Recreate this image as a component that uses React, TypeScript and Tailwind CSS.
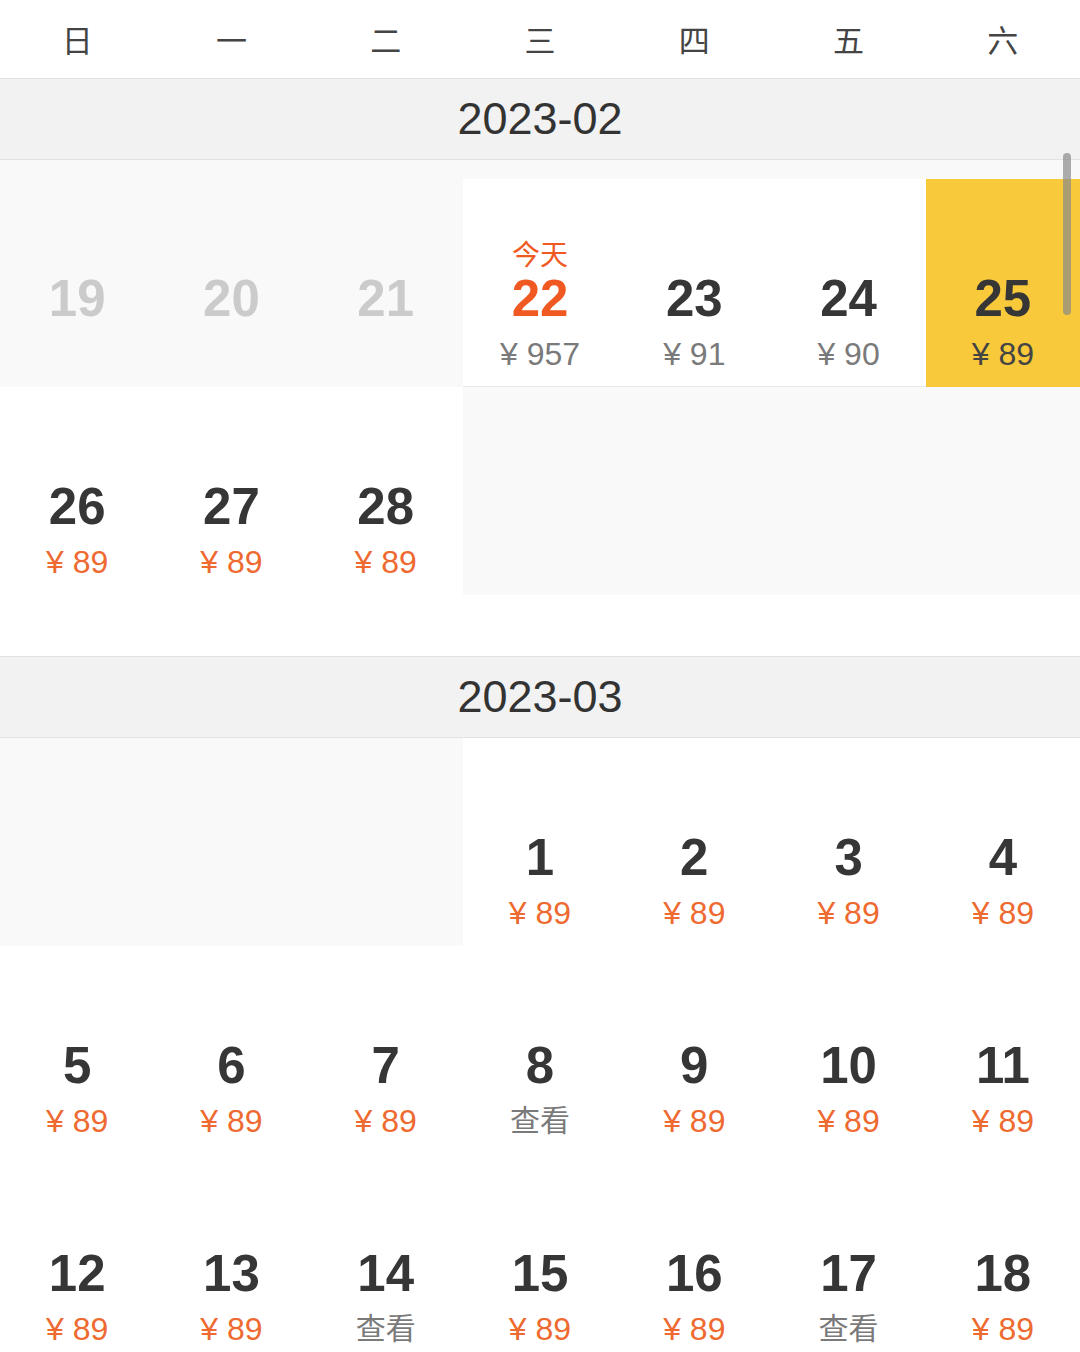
import React from "react";

type Cell = {
  d?: number;
  price?: string;
  kind?: "disabled" | "empty" | "today" | "grey" | "selected" | "normal" | "view";
  line?: boolean;
};

const weekdays = ["日", "一", "二", "三", "四", "五", "六"];

const feb: Cell[][] = [
  [
    { d: 19, kind: "disabled" },
    { d: 20, kind: "disabled" },
    { d: 21, kind: "disabled" },
    { d: 22, kind: "today", price: "¥ 957", line: true },
    { d: 23, kind: "grey", price: "¥ 91", line: true },
    { d: 24, kind: "grey", price: "¥ 90", line: true },
    { d: 25, kind: "selected", price: "¥ 89" },
  ],
  [
    { d: 26, kind: "normal", price: "¥ 89" },
    { d: 27, kind: "normal", price: "¥ 89" },
    { d: 28, kind: "normal", price: "¥ 89" },
    { kind: "empty" },
    { kind: "empty" },
    { kind: "empty" },
    { kind: "empty" },
  ],
];

const p = (d: number): Cell => ({ d, kind: "normal", price: "¥ 89" });
const v = (d: number): Cell => ({ d, kind: "view", price: "查看" });

const mar: Cell[][] = [
  [{ kind: "empty" }, { kind: "empty" }, { kind: "empty" }, p(1), p(2), p(3), p(4)],
  [p(5), p(6), p(7), v(8), p(9), p(10), p(11)],
  [p(12), p(13), v(14), p(15), p(16), v(17), p(18)],
];

function DayCell({ c }: { c: Cell }) {
  if (c.kind === "empty") {
    return <div className="h-[208px] bg-[#f9f9f9]" />;
  }
  const bg =
    c.kind === "disabled"
      ? "bg-[#f9f9f9]"
      : c.kind === "selected"
      ? "bg-[#f8c93a]"
      : "bg-white";
  const numColor =
    c.kind === "disabled"
      ? "text-[#cbcbcb]"
      : c.kind === "today"
      ? "text-[#f05a22]"
      : "text-[#363636]";
  const priceColor =
    c.kind === "normal"
      ? "text-[#ee6a30]"
      : c.kind === "selected"
      ? "text-[#444444]"
      : "text-[#7a7a7a]";
  return (
    <div
      className={`h-[208px] flex flex-col items-center ${bg} ${
        c.kind === "today" ? "pt-[59px]" : "pt-[95px]"
      } ${c.line ? "shadow-[inset_0_-1px_0_#e9e9e9]" : ""}`}
    >
      {c.kind === "today" && (
        <div className="text-[28px] leading-[36px] text-[#f05a22]">今天</div>
      )}
      <div className={`text-[51px] leading-[50px] font-bold ${numColor}`}>{c.d}</div>
      {c.price && (
        <div
          className={`mt-[10px] leading-[40px] ${priceColor} ${
            c.kind === "view" ? "text-[30px]" : "text-[32px]"
          }`}
        >
          {c.price}
        </div>
      )}
    </div>
  );
}

function MonthHeader({ label }: { label: string }) {
  return (
    <div className="h-[82px] bg-[#f2f2f2] border-y border-[#e2e2e2] flex items-center justify-center text-[45px] text-[#333333]">
      {label}
    </div>
  );
}

export default function App() {
  return (
    <div
      className="relative w-[1080px] h-[1352px] overflow-hidden bg-white"
      style={{ fontFamily: '"Liberation Sans", Arial, "Noto Sans CJK SC", sans-serif' }}
    >
      <div className="grid grid-cols-7 h-[78px] items-center bg-white">
        {weekdays.map((w) => (
          <div
            key={w}
            className="text-center text-[31px] text-[#444444]"
            style={{ fontFamily: '"Noto Sans CJK SC", sans-serif', fontWeight: 400 }}
          >
            {w}
          </div>
        ))}
      </div>
      <MonthHeader label="2023-02" />
      <div className="h-[19px] bg-[#f9f9f9]" />
      {feb.map((row, i) => (
        <div key={i} className="grid grid-cols-7">
          {row.map((c, j) => (
            <DayCell key={j} c={c} />
          ))}
        </div>
      ))}
      <div className="h-[61px] bg-white" />
      <MonthHeader label="2023-03" />
      {mar.map((row, i) => (
        <div key={i} className="grid grid-cols-7">
          {row.map((c, j) => (
            <DayCell key={j} c={c} />
          ))}
        </div>
      ))}
      <div className="absolute left-[1063px] top-[153px] w-[8px] h-[162px] rounded-full bg-[#8a8a8a]/70" />
    </div>
  );
}
